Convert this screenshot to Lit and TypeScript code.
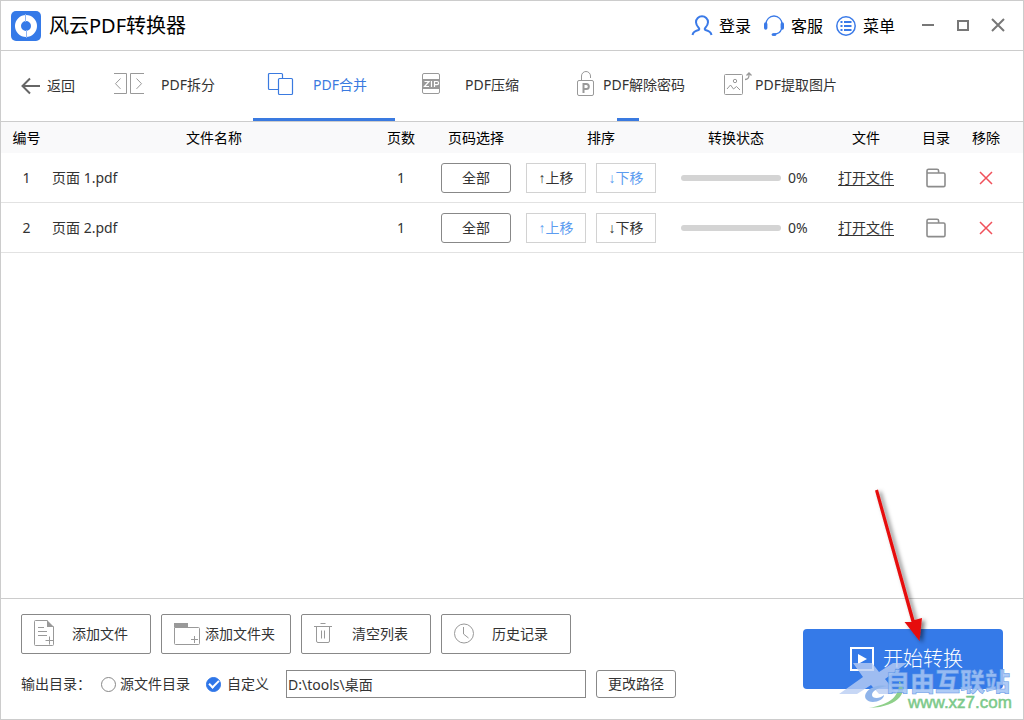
import { LitElement, html, css } from "lit";
import { customElement, state } from "lit/decorators.js";
import { classMap } from "lit/directives/class-map.js";

interface FileRow {
  name: string;
  pages: number;
  progress: number;
}

const backIcon = html`<svg width="20" height="18" viewBox="0 0 20 18" fill="none" stroke="#666" stroke-width="2"><path d="M20 9H3M10 1.500L2.500 9L10 16.500"/></svg>`;

const tabIcons = {
  split: html`<svg width="32" height="26" viewBox="0 0 32 26" fill="none" stroke="#999"><path d="M1 1.500h12.500v20H1M31 1.500H17.500v20H31M7.500 6.500l-5 5.200l5 5.200M23.500 6.500l5 5.200l-5 5.200"/></svg>`,
  merge: html`<svg width="32" height="26" viewBox="0 0 32 26" fill="none" stroke="#3a7ae0" stroke-width="1.200"><path d="M13.500 17.500H4.500a1 1 0 0 1-1-1V2.500a1 1 0 0 1 1-1h12a1 1 0 0 1 1 1V6.500"/><rect x="13.500" y="6.500" width="14" height="16" rx="1"/></svg>`,
  zip: html`<svg width="32" height="26" viewBox="0 0 32 26" fill="none" stroke="#999"><rect x="5.500" y="1.500" width="17" height="20" rx="1.500"/><path d="M5 7h18v10H5z" fill="#999" stroke="none"/><path d="M7.500 9.500h4.500l-4.500 5H12M14.500 9v6M17.500 15V9.500h2.500a1.400 1.400 0 0 1 0 3.200h-2.500" stroke="#fff" stroke-width="1.200"/></svg>`,
  unlock: html`<svg width="32" height="30" viewBox="0 0 32 30" fill="none" stroke="#999"><path d="M12.500 10V6a4.500 4.500 0 0 1 9 0v2"/><rect x="8.500" y="10.500" width="16" height="15" rx="1.500"/><path d="M14.500 23V14h2.800a2.500 2.500 0 0 1 0 5h-2.800" stroke-width="2"/></svg>`,
  image: html`<svg width="32" height="30" viewBox="0 0 32 30" fill="none" stroke="#999"><rect x="3.500" y="4.500" width="18" height="20" rx="1"/><circle cx="14" cy="11" r="1.700"/><path d="M6 19l3.500-4l3 4l3-2.500l3.500 3.500"/><path d="M24 9.500c3 0 4-1.500 4-4.500V3M25.500 5.500L28 3l2.500 2.500" stroke-width="1.300"/></svg>`,
};

const actionIcons = {
  file: html`<svg width="28" height="30" viewBox="0 0 28 30" fill="none" stroke="#999"><path d="M15.500 1.500H3.500a1 1 0 0 0-1 1v23a1 1 0 0 0 1 1h17a1 1 0 0 0 1-1V7.500"/><path d="M15 1l7 7h-7z" fill="#999" stroke="none"/><path d="M6 8.500h6M6 12.500h9M6 16.500h9M17.500 17.500v8M13.500 21.500h8"/></svg>`,
  folder: html`<svg width="28" height="30" viewBox="0 0 28 30" fill="none" stroke="#999"><path d="M2 4h14v4H2z" fill="#999" stroke="none"/><path d="M2.500 8.500h24a1 1 0 0 1 1 1v15a1 1 0 0 1-1 1h-23a1 1 0 0 1-1-1zM22.500 17v7M19 20.500h7"/></svg>`,
  trash: html`<svg width="28" height="30" viewBox="0 0 28 30" fill="none" stroke="#999"><path d="M2 7.500h18M8.500 4.500h5M4.500 7.500V22a1.500 1.500 0 0 0 1.500 1.500h10a1.500 1.500 0 0 0 1.500-1.500V7.500M9.500 11.500v8M12.500 11.500v8"/></svg>`,
  clock: html`<svg width="28" height="30" viewBox="0 0 28 30" fill="none" stroke="#999"><circle cx="12" cy="14.500" r="9.500"/><path d="M11.500 8v7l5 4"/></svg>`,
};

const tabs = [
  { icon: tabIcons.split, label: "PDF拆分" },
  { icon: tabIcons.merge, label: "PDF合并" },
  { icon: tabIcons.zip, label: "PDF压缩" },
  { icon: tabIcons.unlock, label: "PDF解除密码", hint: true },
  { icon: tabIcons.image, label: "PDF提取图片" },
];

const actions = [
  { icon: actionIcons.file, label: "添加文件" },
  { icon: actionIcons.folder, label: "添加文件夹" },
  { icon: actionIcons.trash, label: "清空列表" },
  { icon: actionIcons.clock, label: "历史记录" },
];

@customElement("app-root")
export class AppRoot extends LitElement {
  @state() private activeTab = 1;
  @state() private rows: FileRow[] = [
    { name: "页面 1.pdf", pages: 1, progress: 0 },
    { name: "页面 2.pdf", pages: 1, progress: 0 },
  ];

  static styles = css`
    :host {
      display: flex;
      flex-direction: column;
      position: relative;
      box-sizing: border-box;
      min-height: 100vh;
      border: 1px solid #ccc;
      background: #fff;
      color: #333;
      font: 400 14px/20px "Noto Sans", "Noto Sans CJK SC", sans-serif;
    }
    * { box-sizing: border-box; }
    svg { display: block; flex: none; }
    button, input { font: inherit; color: inherit; margin: 0; }
    button { padding: 0; border: 0; background: none; white-space: nowrap; }

    .titlebar {
      display: flex;
      align-items: center;
      height: 50px;
      padding: 0 10px;
      border-bottom: 1px solid #ccc;
      color: #000;
    }
    .title { margin: 0 auto 0 8px; font-size: 20px; font-weight: 400; line-height: 28px; }
    .user { display: flex; gap: 12px; font-size: 16px; }
    .user button { display: flex; align-items: center; gap: 6px; }
    .window { display: flex; gap: 15px; margin: 0 5px 0 23px; }

    .nav { display: flex; border-bottom: 1px solid #ccc; height: 71px; }
    .back { display: flex; align-items: center; gap: 7px; width: 100px; padding-left: 19px; }
    .tabs { display: flex; gap: 10px; }
    .tab { display: flex; flex-direction: column; align-items: center; width: 142px; }
    .tab-body { display: flex; align-items: center; flex: 1; width: 100%; padding: 0 12px; }
    .tab-label { flex: 1; text-align: center; }
    .tab-line { width: 100%; height: 3px; }
    .tab.active { color: #3a7ae0; }
    .tab.active .tab-line { background: #3a7ae0; }
    .tab.hint .tab-line { width: 22px; background: #3a7ae0; }

    .list { flex: 1; }
    table { width: 100%; table-layout: fixed; border-collapse: separate; border-spacing: 0; }
    th, td { padding: 0; text-align: center; font-weight: 400; }
    th { height: 31px; background: #f9f9fa; color: #000; }
    td { height: 50px; border-bottom: 1px solid #e2e2e2; }
    td.name { text-align: left; }
    .c-no { width: 51px; }
    .c-pages { width: 50px; }
    .c-range { width: 100px; }
    .c-sort, .c-status { width: 150px; }
    .c-file { width: 80px; }
    .c-dir { width: 60px; }
    .c-del { width: 57px; }
    th.status { padding-right: 30px; }
    .del { padding-right: 17px; }
    .range { display: block; width: 70px; height: 30px; margin: 0 auto; border: 1px solid #888; border-radius: 3px; }
    .sort { display: flex; gap: 10px; }
    .sort button { width: 60px; height: 30px; border: 1px solid #d2d2d2; }
    .sort button:disabled { color: #5c9cf0; }
    .arrow { font-family: "Liberation Sans", sans-serif; }
    .status-cell { display: flex; align-items: center; gap: 7px; padding-left: 5px; }
    .bar { width: 100px; height: 6px; border-radius: 3px; background: #d4d4d4; overflow: hidden; }
    .bar-fill { height: 100%; background: #3a7ae0; }
    a { color: inherit; text-decoration: underline; text-underline-offset: 2px; }
    .icon-button { display: block; margin: 0 auto; }

    .footer {
      display: flex;
      justify-content: space-between;
      align-items: flex-end;
      padding: 15px 20px 21px;
      border-top: 1px solid #ccc;
    }
    .actions { display: flex; gap: 10px; margin-bottom: 16px; }
    .action {
      display: flex;
      align-items: center;
      width: 130px;
      height: 40px;
      padding: 0 10px;
      border: 1px solid #888;
      border-radius: 2px;
    }
    .action span { flex: 1; }
    .output { display: flex; align-items: center; height: 28px; }
    .choice { display: flex; align-items: center; gap: 4px; margin-left: 10px; }
    .choice + .choice { gap: 6px; margin-left: 16px; }
    .radio {
      display: grid;
      place-items: center;
      appearance: none;
      width: 15px;
      height: 15px;
      border: 1px solid #888;
      border-radius: 50%;
    }
    .radio:checked { border-color: #2f76e8; background: #2f76e8; }
    .radio:checked::before {
      content: "";
      width: 8px;
      height: 4px;
      margin-bottom: 2px;
      border: solid #fff;
      border-width: 0 0 2px 2px;
      transform: rotate(-45deg);
    }
    .path { width: 300px; height: 28px; margin: 0 10px 0 17px; padding: 0 1px; border: 1px solid #888; background: #fff; }
    .change { width: 80px; height: 28px; border: 1px solid #888; border-radius: 3px; }
    .start {
      display: flex;
      justify-content: center;
      align-items: center;
      gap: 9px;
      width: 200px;
      height: 60px;
      margin-bottom: 9px;
      padding-left: 7px;
      border-radius: 4px;
      background: #357ae8;
      color: #fff;
      font-size: 20px;
      font-weight: 300;
    }
    .pointer { position: absolute; right: 88px; bottom: 72px; pointer-events: none; }
    .watermark { position: absolute; right: 4px; bottom: 2px; pointer-events: none; }
    .mark-name { font: 900 25px "Noto Sans CJK SC", sans-serif; }
    .mark-site { font: 400 17px "Liberation Sans", sans-serif; }
  `;

  private remove(index: number) {
    this.rows = this.rows.filter((_, i) => i !== index);
  }

  private renderRow(row: FileRow, i: number) {
    return html`<tr>
      <td>${i + 1}</td>
      <td class="name">${row.name}</td>
      <td>${row.pages}</td>
      <td><button class="range">全部</button></td>
      <td>
        <div class="sort">
          <button ?disabled=${i === 1}><span class="arrow">↑</span>上移</button>
          <button ?disabled=${i === 0}><span class="arrow">↓</span>下移</button>
        </div>
      </td>
      <td>
        <div class="status-cell">
          <div class="bar"><div class="bar-fill" style="width:${row.progress}%"></div></div>
          <span>${row.progress}%</span>
        </div>
      </td>
      <td><a href="#">打开文件</a></td>
      <td>
        <button class="icon-button" aria-label="目录">
          <svg width="20" height="20" viewBox="0 0 20 20" fill="none" stroke="#8c8c8c" stroke-width="1.600"><path d="M1 16.500V2.800a1.600 1.600 0 0 1 1.600-1.600h8.400a1.600 1.600 0 0 1 1.600 1.600V5M1 5h16.600a1.400 1.400 0 0 1 1.400 1.400v10.800a1.400 1.400 0 0 1-1.400 1.400H2.400A1.400 1.400 0 0 1 1 17.200z"/></svg>
        </button>
      </td>
      <td class="del">
        <button class="icon-button" aria-label="移除" @click=${() => this.remove(i)}>
          <svg width="14" height="14" viewBox="0 0 14 14" stroke="#f0505a" stroke-width="1.500"><path d="M1 1l12 12M13 1L1 13"/></svg>
        </button>
      </td>
    </tr>`;
  }

  render() {
    return html`
      <header class="titlebar">
        <svg width="30" height="30" viewBox="0 0 30 30"><rect width="30" height="30" rx="5" fill="#357ae8"/><circle cx="15" cy="15" r="8" fill="none" stroke="#fff" stroke-width="6"/><path d="M14.500 3v8M15.500 19v8" stroke="#8fb6f4" stroke-width="1"/></svg>
        <h1 class="title">风云PDF转换器</h1>
        <div class="user">
          <button>
            <svg width="22" height="22" viewBox="0 0 22 22" fill="none" stroke="#3a7ae8" stroke-width="2"><path d="M1.500 20c.5-3 3-4.300 6-5c1-.4.900-1.400.3-2C6 11 5 9.500 5 7.300a6 6 0 0 1 12 0c0 2.200-1 3.700-2.800 5.700c-.6.600-.7 1.600.3 2c3 .7 5.500 2 6 5"/></svg>登录
          </button>
          <button>
            <svg width="22" height="22" viewBox="0 0 22 22" fill="none" stroke="#3a7ae8"><path d="M3 9a8 8 0 0 1 16 0M18.500 14c-1 3-3.500 5-7 5" stroke-width="1.300"/><path d="M2.700 9v4M19.300 9v4" stroke-width="3.400" stroke-linecap="round"/><ellipse cx="11" cy="19.500" rx="2.500" ry="1.500" fill="#3a7ae8" stroke="none"/></svg>客服
          </button>
          <button>
            <svg width="22" height="22" viewBox="0 0 22 22" fill="none" stroke="#3a7ae8" stroke-width="1.500"><circle cx="11" cy="11" r="9.200"/><path d="M5.500 7h2M5.500 11h2M5.500 15h2M9 7h7.500M9 11h7.500M9 15h7.500" stroke-width="1.800"/></svg>菜单
          </button>
        </div>
        <div class="window">
          <button aria-label="最小化"><svg width="20" height="20" viewBox="0 0 20 20" stroke="#777" stroke-width="2"><path d="M4 9h12"/></svg></button>
          <button aria-label="最大化"><svg width="20" height="20" viewBox="0 0 20 20" fill="none" stroke="#777" stroke-width="2"><path d="M5 5h10v9H5z"/></svg></button>
          <button aria-label="关闭"><svg width="20" height="20" viewBox="0 0 20 20" stroke="#777" stroke-width="2"><path d="M4 3l12 12M16 3L4 15"/></svg></button>
        </div>
      </header>
      <nav class="nav">
        <button class="back">${backIcon}返回</button>
        <div class="tabs">
          ${tabs.map(
            (t, i) => html`<button
              class=${classMap({ tab: true, active: i === this.activeTab, hint: !!t.hint })}
              @click=${() => (this.activeTab = i)}
            >
              <span class="tab-body">${t.icon}<span class="tab-label">${t.label}</span></span>
              <span class="tab-line"></span>
            </button>`
          )}
        </div>
      </nav>
      <main class="list">
        <table>
          <colgroup>
            <col class="c-no" /><col /><col class="c-pages" /><col class="c-range" /><col class="c-sort" />
            <col class="c-status" /><col class="c-file" /><col class="c-dir" /><col class="c-del" />
          </colgroup>
          <thead>
            <tr>
              <th>编号</th><th>文件名称</th><th>页数</th><th>页码选择</th><th>排序</th>
              <th class="status">转换状态</th><th>文件</th><th>目录</th><th class="del">移除</th>
            </tr>
          </thead>
          <tbody>${this.rows.map((r, i) => this.renderRow(r, i))}</tbody>
        </table>
      </main>
      <footer class="footer">
        <div>
          <div class="actions">
            ${actions.map((a) => html`<button class="action">${a.icon}<span>${a.label}</span></button>`)}
          </div>
          <div class="output">
            <span>输出目录：</span>
            <label class="choice"><input class="radio" type="radio" name="output" />源文件目录</label>
            <label class="choice"><input class="radio" type="radio" name="output" checked />自定义</label>
            <input class="path" type="text" aria-label="输出目录" value="D:\\tools\\桌面" />
            <button class="change">更改路径</button>
          </div>
        </div>
        <button class="start">
          <svg width="24" height="24" viewBox="0 0 24 24" fill="none" stroke="#fff" stroke-width="2"><rect x="1" y="1" width="22" height="22"/><path d="M8 7l9 5l-9 5z" fill="#fff" stroke="none"/></svg>开始转换
        </button>
      </footer>
      <svg class="watermark" width="180" height="60" viewBox="0 0 180 60" aria-hidden="true">
        <path d="M14 6h19l7 9l14-9h14L46 22l12 15H40l-8-9l-14 9H0L24 20z" fill="#b9cdf3" fill-opacity=".8"/>
        <path d="M60 24c10 8 2 26-30 27c22-4 31-12 30-27z" fill="#8fd08a"/>
        <path d="M49 29c-14-3-26 6-22 13c4 6 18 2 18-4c-4 4-12 4-12 0c0-4 6-8 16-9z" fill="#8fb4ea"/>
        <text class="mark-name" x="46" y="34" fill="#a3c4f4" fill-opacity=".9" stroke="#5f95e6" stroke-width=".5">自由互联站</text>
        <text class="mark-site" x="69" y="51" fill="#7cc98a" stroke="#7cc98a" stroke-width=".5">www.xz7.com</text>
      </svg>
      <svg class="pointer" width="64" height="160" viewBox="0 0 64 160" aria-hidden="true">
        <defs><filter id="shade" x="-30%" y="-10%" width="180%" height="120%"><feDropShadow dx="3" dy="2" stdDeviation="2" flood-color="#000" flood-opacity=".5"/></filter></defs>
        <path d="M4 3.500L7 2.500L43.500 133L51 131L48.500 154L33.500 135L40.500 135z" fill="#e60f0f" filter="url(#shade)"/>
      </svg>
    `;
  }
}
